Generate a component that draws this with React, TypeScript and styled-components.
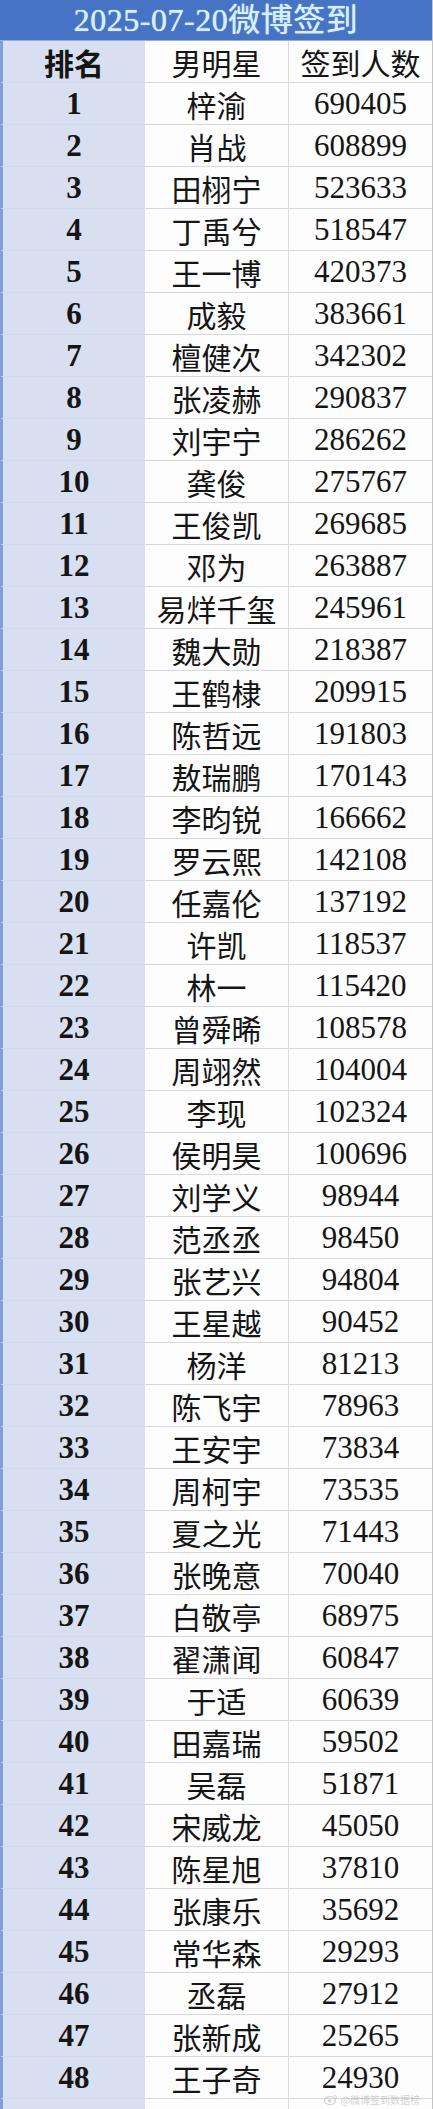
import styled, { createGlobalStyle } from "styled-components"

const GlobalStyle = createGlobalStyle`
  html, body {
    margin: 0;
    padding: 0;
    background: #ffffff;
  }
`

const rows: [string, number][] = [
  ["梓渝", 690405],
  ["肖战", 608899],
  ["田栩宁", 523633],
  ["丁禹兮", 518547],
  ["王一博", 420373],
  ["成毅", 383661],
  ["檀健次", 342302],
  ["张凌赫", 290837],
  ["刘宇宁", 286262],
  ["龚俊", 275767],
  ["王俊凯", 269685],
  ["邓为", 263887],
  ["易烊千玺", 245961],
  ["魏大勋", 218387],
  ["王鹤棣", 209915],
  ["陈哲远", 191803],
  ["敖瑞鹏", 170143],
  ["李昀锐", 166662],
  ["罗云熙", 142108],
  ["任嘉伦", 137192],
  ["许凯", 118537],
  ["林一", 115420],
  ["曾舜晞", 108578],
  ["周翊然", 104004],
  ["李现", 102324],
  ["侯明昊", 100696],
  ["刘学义", 98944],
  ["范丞丞", 98450],
  ["张艺兴", 94804],
  ["王星越", 90452],
  ["杨洋", 81213],
  ["陈飞宇", 78963],
  ["王安宇", 73834],
  ["周柯宇", 73535],
  ["夏之光", 71443],
  ["张晚意", 70040],
  ["白敬亭", 68975],
  ["翟潇闻", 60847],
  ["于适", 60639],
  ["田嘉瑞", 59502],
  ["吴磊", 51871],
  ["宋威龙", 45050],
  ["陈星旭", 37810],
  ["张康乐", 35692],
  ["常华森", 29293],
  ["丞磊", 27912],
  ["张新成", 25265],
  ["王子奇", 24930],
]

const Sheet = styled.div`
  position: relative;
  width: 433px;
  height: 2109px;
  overflow: hidden;
  background: #ffffff;
  border-right: 1px solid #c4c4c4;
  box-sizing: border-box;
`

const Title = styled.div`
  height: 41px;
  background: #4673c4;
  color: #d4f0f6;
  display: flex;
  align-items: center;
  justify-content: center;
  font-family: "Liberation Serif", "Noto Sans CJK SC", serif;
  font-size: 32px;
  line-height: 1;
  letter-spacing: 0.5px;
  text-shadow: 0 0 1px #e8fbff;
  border-bottom: 1px solid #8fb0e0;
  box-sizing: border-box;
`

const Row = styled.div<{ $h?: number }>`
  display: grid;
  grid-template-columns: 145px 144px 1fr;
  height: ${(p) => p.$h ?? 42}px;
`

const Cell = styled.div<{ $kind: "rank" | "name" | "count" }>`
  display: flex;
  align-items: center;
  justify-content: center;
  box-sizing: border-box;
  color: #151515;
  white-space: nowrap;
  line-height: 1;
  overflow: hidden;
  font-family: ${(p) =>
    p.$kind === "name"
      ? '"Noto Sans CJK SC", sans-serif'
      : '"Liberation Serif", "Noto Sans CJK SC", serif'};
  font-size: ${(p) => (p.$kind === "name" ? 30 : 31)}px;
  font-weight: ${(p) => (p.$kind === "rank" ? 700 : 400)};
  background: ${(p) => (p.$kind === "rank" ? "#d8dff0" : "#fdfdfd")};
  border-left: ${(p) => (p.$kind === "rank" ? "3px solid #7f9fd8" : "none")};
  border-right: ${(p) => (p.$kind === "name" ? "1px solid #dcdcdc" : "none")};
  border-bottom: 1px solid
    ${(p) => (p.$kind === "rank" ? "#d3daed" : "#d8d8d8")};
`

const HeaderCell = styled(Cell)<{ $bold?: boolean }>`
  font-family: "Noto Sans CJK SC", sans-serif;
  font-size: 30px;
  font-weight: ${(p) => (p.$bold ? 700 : 400)};
`

const Watermark = styled.div`
  position: absolute;
  right: 12px;
  bottom: 4px;
  display: flex;
  align-items: center;
  gap: 3px;
  font-family: "Noto Sans CJK SC", sans-serif;
  font-size: 10px;
  line-height: 1;
  color: rgba(150, 150, 150, 0.45);
`

export default function App() {
  return (
    <>
      <GlobalStyle />
      <Sheet>
        <Title>2025-07-20微博签到</Title>
        <Row>
          <HeaderCell $kind="rank" $bold>
            排名
          </HeaderCell>
          <HeaderCell $kind="name">男明星</HeaderCell>
          <HeaderCell $kind="count">签到人数</HeaderCell>
        </Row>
        {rows.map(([name, count], i) => (
          <Row key={name}>
            <Cell $kind="rank">{i + 1}</Cell>
            <Cell $kind="name">{name}</Cell>
            <Cell $kind="count">{count}</Cell>
          </Row>
        ))}
        <Row $h={12}>
          <Cell $kind="rank" />
          <Cell $kind="name" />
          <Cell $kind="count" />
        </Row>
        <Watermark>
          <svg width="14" height="11" viewBox="0 0 14 11">
            <ellipse
              cx="6"
              cy="6.5"
              rx="5.5"
              ry="4"
              fill="none"
              stroke="currentColor"
              strokeWidth="1.2"
            />
            <circle cx="5.5" cy="6.8" r="1.6" fill="currentColor" />
            <path
              d="M10 1.5 A3 3 0 0 1 13 4.5"
              fill="none"
              stroke="currentColor"
              strokeWidth="1"
            />
          </svg>
          <span>@微博签到数据榜</span>
        </Watermark>
      </Sheet>
    </>
  )
}
